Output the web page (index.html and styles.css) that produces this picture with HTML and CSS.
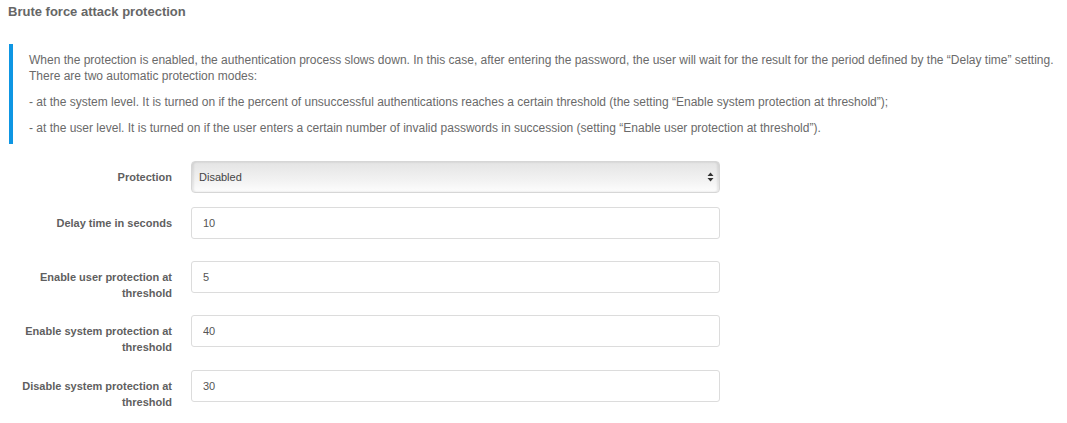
FILE: index.html
```html
<!DOCTYPE html>
<html>
<head>
<meta charset="utf-8">
<link rel="stylesheet" href="styles.css">
</head>
<body>
<div class="page">
  <h2 class="title">Brute force attack protection</h2>
  <div class="callout">
    <p>When the protection is enabled, the authentication process slows down. In this case, after entering the password, the user will wait for the result for the period defined by the “Delay time” setting. There are two automatic protection modes:</p>
    <p>- at the system level. It is turned on if the percent of unsuccessful authentications reaches a certain threshold (the setting “Enable system protection at threshold”);</p>
    <p>- at the user level. It is turned on if the user enters a certain number of invalid passwords in succession (setting “Enable user protection at threshold”).</p>
  </div>
  <form class="form">
    <div class="row">
      <label class="label">Protection</label>
      <div class="control">
        <div class="select">
          <span>Disabled</span>
          <svg class="arrows" width="7" height="10" viewBox="0 0 7 10"><path d="M3.5 0.5 L6.5 4 L0.5 4 Z M0.5 6 L6.5 6 L3.5 9.5 Z" fill="#333"/></svg>
        </div>
      </div>
    </div>
    <div class="row row-wide">
      <label class="label">Delay time in seconds</label>
      <div class="control"><input class="input" type="text" value="10"></div>
    </div>
    <div class="row">
      <label class="label">Enable user protection at threshold</label>
      <div class="control"><input class="input" type="text" value="5"></div>
    </div>
    <div class="row row-loose">
      <label class="label">Enable system protection at threshold</label>
      <div class="control"><input class="input" type="text" value="40"></div>
    </div>
    <div class="row">
      <label class="label">Disable system protection at threshold</label>
      <div class="control"><input class="input" type="text" value="30"></div>
    </div>
  </form>
</div>
</body>
</html>
```

FILE: styles.css
```css
html, body {
  margin: 0;
  padding: 0;
  background: #fff;
}
body {
  font-family: "Liberation Sans", Arial, Helvetica, sans-serif;
  font-size: 11px;
  color: #666;
}
.page {
  padding: 4px 8px 0 8px;
}
.title {
  margin: 0 0 24px 0;
  font-size: 13px;
  line-height: 16px;
  font-weight: bold;
  color: #666;
}
.callout {
  margin-left: 1px;
  border-left: 4px solid #0e96e3;
  padding: 8px 0 8px 16px;
}
.callout p {
  margin: 0 0 10px 0;
  line-height: 16px;
  font-size: 12px;
  color: #6a6a6a;
}
.callout p:last-child {
  margin-bottom: 0;
}
.form {
  margin: 17px 0 0 1px;
}
.row {
  display: flex;
  align-items: flex-start;
  margin-bottom: 14px;
}
.row-wide {
  margin-bottom: 22px;
}
.row-loose {
  margin-bottom: 15px;
}
.label {
  width: 163px;
  box-sizing: border-box;
  padding-top: 8px;
  padding-left: 10px;
  line-height: 16px;
  text-align: right;
  font-weight: bold;
  color: #5f5f5f;
  font-size: 11px;
}
.control {
  margin-left: 19px;
  width: 529px;
}
.input {
  display: block;
  box-sizing: border-box;
  width: 100%;
  height: 32px;
  margin: 0;
  padding: 0 11px;
  border: 1px solid #dcdcdc;
  border-radius: 3px;
  background: #fff;
  font-family: "Liberation Sans", Arial, Helvetica, sans-serif;
  font-size: 11px;
  color: #555;
  outline: none;
}
.select {
  box-sizing: border-box;
  height: 32px;
  display: flex;
  align-items: center;
  justify-content: space-between;
  padding: 0 5px 0 7px;
  border: 1px solid #d6d6d6;
  border-radius: 4px;
  background: linear-gradient(#e4e4e4, #f2f2f2 60%, #fdfdfd);
  box-shadow: inset 2px 0 2px rgba(0,0,0,0.08), inset -2px 0 2px rgba(0,0,0,0.08);
  font-size: 11px;
  color: #444;
}
.arrows {
  display: block;
}
```
